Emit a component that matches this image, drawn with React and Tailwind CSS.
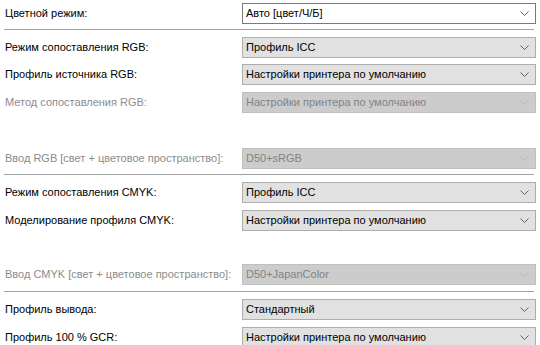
import React from 'react';

const Chevron = ({ disabled }) => (
  <svg width="9" height="5" viewBox="0 0 9 5" className="shrink-0">
    <path d="M0.5 0.5 L4.5 4.5 L8.5 0.5" fill="none" stroke={disabled ? '#b8b8b8' : '#606060'} strokeWidth="1" />
  </svg>
);

const Select = ({ value, variant = 'normal' }) => {
  const box =
    variant === 'white'
      ? 'bg-white border-[#7a7a7a] text-black'
      : variant === 'disabled'
        ? 'bg-[#cccccc] border-[#bfbfbf] text-[#838383]'
        : 'bg-[#e1e1e1] border-[#adadad] text-black';
  return (
    <div className={`ml-auto flex h-[21px] w-[294px] shrink-0 items-center justify-between border pl-[3px] pr-[6px] ${box}`}>
      <span className="whitespace-nowrap leading-none">{value}</span>
      <Chevron disabled={variant === 'disabled'} />
    </div>
  );
};

const Row = ({ label, value, variant, h }) => (
  <div className={`flex items-center pl-[5px] pr-[4px] ${h}`}>
    <span className={`whitespace-nowrap ${variant === 'disabled' ? 'text-[#8c8c8c]' : 'text-black'}`}>{label}</span>
    <Select value={value} variant={variant} />
  </div>
);

const Divider = () => <div className="ml-[4px] mr-[6px] my-[3px] h-px bg-[#a0a0a0]" />;

export default function App() {
  const printer = 'Настройки принтера по умолчанию';
  return (
    <div
      className="h-[345px] w-[540px] overflow-hidden bg-white text-[11px]"
      style={{ fontFamily: '"Liberation Sans", Arial, sans-serif' }}
    >
      <Row h="h-[26px]" label="Цветной режим:" value="Авто [цвет/Ч/Б]" variant="white" />
      <Divider />
      <Row h="h-[28px]" label="Режим сопоставления RGB:" value="Профиль ICC" />
      <Row h="h-[27px]" label="Профиль источника RGB:" value={printer} />
      <Row h="h-[28px]" label="Метод сопоставления RGB:" value={printer} variant="disabled" />
      <div className="h-[29px]" />
      <Row h="h-[26px]" label="Ввод RGB [свет + цветовое пространство]:" value="D50+sRGB" variant="disabled" />
      <Divider />
      <Row h="h-[28px]" label="Режим сопоставления CMYK:" value="Профиль ICC" />
      <Row h="h-[28px]" label="Моделирование профиля CMYK:" value={printer} />
      <div className="h-[26px]" />
      <Row h="h-[28px]" label="Ввод CMYK [свет + цветовое пространство]:" value="D50+JapanColor" variant="disabled" />
      <Divider />
      <Row h="h-[28px]" label="Профиль вывода:" value="Стандартный" />
      <Row h="h-[28px]" label="Профиль 100 % GCR:" value={printer} />
    </div>
  );
}
